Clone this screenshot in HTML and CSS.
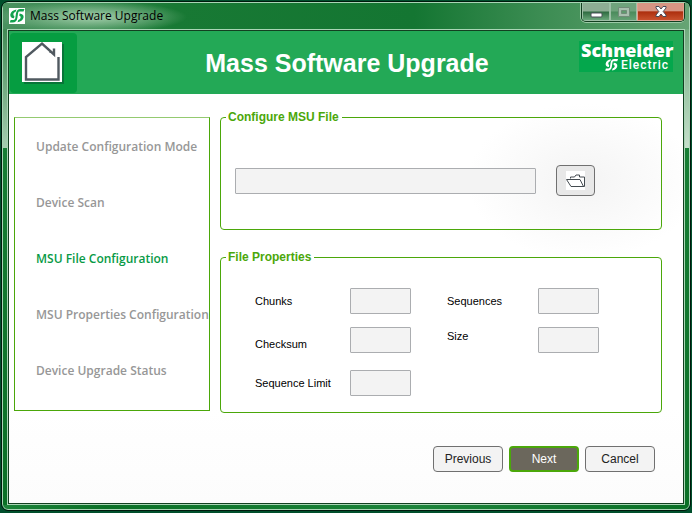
FILE: index.html
```html
<!DOCTYPE html>
<html lang="en">
<head>
<meta charset="utf-8">
<title>Mass Software Upgrade</title>
<link rel="stylesheet" href="styles.css">
</head>
<body>
<div class="window">
  <div class="frame">
    <div class="titlebar">
      <svg class="app-icon" viewBox="0 0 16 16" aria-hidden="true">
        <rect width="16" height="16" fill="#fff"/>
        <path d="M15.500 1L14.500 3.600H10.500Q9.300 3.600 9.100 5L8.500 9.500Q7.800 14.600 3.500 14.600H.8L1.600 12H4.500Q6 12 6.300 10.300L6.900 5.800Q7.500 1 11.500 1z" fill="#12a24e"/>
        <path d="M7.500 1.500Q2 2.500 1.300 6.500 1 10 5 10.200L5.400 8Q3.800 7.500 4.500 5.500 5 4.300 6.600 3.800zM8.500 14.200Q14 13.200 14.600 9.300 14.900 6 10.600 5.500L10.300 7.700Q12.200 8.200 11.600 10 11 11.300 9.300 12z" fill="#12a24e"/>
      </svg>
      <span class="titlebar-text">Mass Software Upgrade</span>
      <div class="window-controls">
        <button class="control control-min" type="button" aria-label="Minimize">
          <svg width="13" height="6" viewBox="0 0 13 6"><rect x="1" y="1" width="11" height="4" rx="1" fill="#fff" stroke="#4a5058"/></svg>
        </button>
        <button class="control control-max" type="button" aria-label="Maximize" disabled>
          <svg width="12" height="10" viewBox="0 0 12 10"><path d="M.5.500h11v9H.5z" fill="#a9bfae" stroke="#718c78"/><path d="M3.500 3.500h5v3h-5z" fill="#5f9a6d" stroke="#718c78"/></svg>
        </button>
        <button class="control control-close" type="button" aria-label="Close">
          <svg width="12" height="11" viewBox="0 0 12 11"><path d="M1 .5h3L6 3 8 .5h3v1.500L8.200 5.500 11 9v1.500H8L6 8l-2 2.500H1V9l2.800-3.500L1 2z" fill="#fff" stroke="#474a58"/></svg>
        </button>
      </div>
    </div>
    <div class="client">
      <header class="banner">
        <button class="home" type="button" aria-label="Home">
          <svg width="44" height="44" viewBox="0 0 44 44">
            <path d="M3 3H43V43H3z" fill="#087538"/>
            <path d="M1 1H41V41H1z" fill="#fff"/>
            <path d="M37.500 16V38.500H5V16L21 2.500 33 13.500V7.500" fill="none" stroke="#505960" stroke-width="2.400"/>
            <path d="M28.500 11.500H33.500V14.500" fill="none" stroke="#505960"/>
          </svg>
        </button>
        <h1 class="banner-title">Mass Software Upgrade</h1>
        <div class="brand">
          <span class="brand-name">Schneider</span>
          <span class="brand-sub">
            <svg width="15" height="14" viewBox="0 0 16 16" aria-hidden="true">
              <path d="M15.500 1L14.500 3.600H10.500Q9.300 3.600 9.100 5L8.500 9.500Q7.800 14.600 3.500 14.600H.8L1.600 12H4.500Q6 12 6.300 10.300L6.900 5.800Q7.500 1 11.500 1z" fill="#fff"/>
              <path d="M7.500 1.500Q2 2.500 1.300 6.500 1 10 5 10.200L5.400 8Q3.800 7.500 4.500 5.500 5 4.300 6.600 3.800zM8.500 14.200Q14 13.200 14.600 9.300 14.900 6 10.600 5.500L10.300 7.700Q12.200 8.200 11.600 10 11 11.300 9.300 12z" fill="#fff"/>
            </svg>
            <span>Electric</span>
          </span>
        </div>
      </header>
      <div class="content">
        <nav class="steps" aria-label="Steps">
          <a class="step" href="#">Update Configuration Mode</a>
          <a class="step" href="#">Device Scan</a>
          <a class="step step-current" href="#" aria-current="step">MSU File Configuration</a>
          <a class="step" href="#">MSU Properties Configuration</a>
          <a class="step" href="#">Device Upgrade Status</a>
        </nav>
        <form class="main">
          <fieldset class="group">
            <legend>Configure MSU File</legend>
            <div class="file-row">
              <input class="field" type="text" aria-label="MSU file" readonly>
              <button class="button browse" type="button" aria-label="Browse">
                <svg width="19" height="19" viewBox="0 0 19 19">
                  <rect width="19" height="19" fill="#fff"/>
                  <path d="M4.500 7.500V6H8.500L10 4H13.500V6H18.500V15.500H17M.5 8.500H14L17.500 15.500H5L.5 8.500" fill="none" stroke="#444b50"/>
                </svg>
              </button>
            </div>
          </fieldset>
          <fieldset class="group">
            <legend>File Properties</legend>
            <div class="properties">
              <label for="chunks">Chunks</label>
              <input class="field" id="chunks" type="text" readonly>
              <label for="sequences">Sequences</label>
              <input class="field" id="sequences" type="text" readonly>
              <label for="checksum">Checksum</label>
              <input class="field" id="checksum" type="text" readonly>
              <label class="label-top" for="size">Size</label>
              <input class="field" id="size" type="text" readonly>
              <label for="limit">Sequence Limit</label>
              <input class="field" id="limit" type="text" readonly>
            </div>
          </fieldset>
          <div class="actions">
            <button class="button" type="button">Previous</button>
            <button class="button button-primary" type="button">Next</button>
            <button class="button" type="button">Cancel</button>
          </div>
        </form>
      </div>
    </div>
  </div>
</div>
</body>
</html>
```

FILE: styles.css
```css
* {
  box-sizing: border-box;
}

html,
body {
  height: 100%;
}

body {
  margin: 0;
  padding: 1px 1px 2px;
  background: #004f2c;
  font-family: "Liberation Sans", Arial, sans-serif;
  font-size: 12px;
  color: #000;
}

button,
input {
  font: inherit;
}

.window {
  height: 100%;
  border: 1px solid #001a0c;
  border-radius: 7px;
  overflow: hidden;
}

.frame {
  display: flex;
  flex-direction: column;
  height: 100%;
  padding: 0 4px 4px;
  border: 1px solid #a9d5b5;
  border-radius: 6px;
  background:
    linear-gradient(#2a7c40 0, #a5cdb0 145px, transparent 145px) left / 4px 100% no-repeat,
    linear-gradient(#5d9f6c 0, #c5dfcb 145px, transparent 145px) right / 4px 100% no-repeat,
    linear-gradient(90deg, #1c843a, #0a7026 15%, #1c843a 60%, #0a7026) bottom / 100% 4px no-repeat,
    linear-gradient(#1c843a, #0a7026) 0 0 no-repeat;
}

.titlebar {
  display: flex;
  align-items: center;
  flex: none;
  height: 26px;
  margin: 0 -4px;
  padding: 0 4px 0 6px;
  background:
    radial-gradient(ellipse 96px 16px at 88px 14px, #8fc19a 20%, transparent),
    linear-gradient(90deg, #4a9260, #187934 25%, #147632 60%, #3b8c52 78%, #66a474);
}

.app-icon {
  width: 16px;
  height: 16px;
}

.titlebar-text {
  flex: 1;
  margin-left: 5px;
  font-family: "Open Sans", sans-serif;
  line-height: 16px;
}

.window-controls {
  display: flex;
  align-self: flex-start;
  height: 19px;
  border: 1px solid #123f20;
  border-top: 0;
  border-radius: 0 0 5px 5px;
  box-shadow: 0 1px 0 #9cc9a7, -1px 0 0 #9cc9a7;
  overflow: hidden;
}

.control {
  display: flex;
  align-items: center;
  justify-content: center;
  width: 27px;
  padding: 0;
  border: 1px solid #9dbfa6;
  border-top: 0;
  background: linear-gradient(#8dad94 48%, #2e6b40 52%, #6aa77a);
}

.control-min {
  width: 28px;
  padding-top: 6px;
}

.control-max {
  background: linear-gradient(#6fa37c 48%, #4a8b5b 52%, #65a074);
}

.control-close {
  width: 47px;
  border-color: #e0a191;
  background: linear-gradient(#d79583 46%, #ad2f0e 52%, #c8512d);
}

.client {
  display: flex;
  flex-direction: column;
  flex: 1;
  min-height: 0;
  border: 1px solid #a9d5b5;
  outline: 1px solid #123f20;
  outline-offset: -2px;
  padding: 1px;
  background:
    radial-gradient(ellipse 115px 78px at 85% 32%, #f4f4f4, rgba(255, 255, 255, 0)),
    linear-gradient(#fff 80%, #fcfcfc);
}

.banner {
  display: flex;
  align-items: center;
  flex: none;
  height: 63px;
  padding: 0 10px 0 1px;
  background: #23a956;
}

.home {
  display: flex;
  align-items: center;
  justify-content: center;
  width: 67px;
  height: 60px;
  padding: 0 2px 0 0;
  border: 0;
  border-radius: 4px;
  background: #069d41;
}

.banner-title {
  flex: 1;
  margin: 0;
  padding-left: 38px;
  font-size: 25px;
  line-height: 28px;
  text-align: center;
  color: #fff;
}

.brand {
  display: flex;
  flex-direction: column;
  width: 94px;
  height: 31px;
  margin-bottom: 12px;
  padding: 0 2px;
  background: #04a74c;
  color: #fff;
}

.brand-name {
  height: 17px;
  font-family: "Open Sans", sans-serif;
  font-size: 18px;
  font-weight: 800;
  line-height: 18px;
}

.brand-sub {
  display: flex;
  align-items: center;
  justify-content: flex-end;
  gap: 2px;
  padding-right: 2px;
  font-family: Roboto, sans-serif;
  font-size: 12px;
  font-weight: 500;
  letter-spacing: 1px;
  line-height: 13px;
}

.content {
  display: flex;
  align-items: flex-start;
  gap: 10px;
  flex: 1;
  padding: 16px 21px 0 5px;
}

.steps {
  display: flex;
  flex-direction: column;
  flex: none;
  gap: 38px;
  width: 196px;
  height: 294px;
  margin-top: 7px;
  padding: 20px 0 0 21px;
  border: 1px solid #4ba70a;
  border-top-color: #94ca70;
}

.step {
  font-family: "Open Sans", sans-serif;
  font-size: 12px;
  font-weight: 600;
  line-height: 18px;
  white-space: nowrap;
  color: #979797;
  text-decoration: none;
}

.step-current {
  color: #079a46;
}

.main {
  flex: 1;
  min-width: 0;
}

.group {
  min-width: 0;
  margin: 0 0 20px;
  padding: 0 14px 16px;
  border: 1px solid #4ba70a;
  border-radius: 4px;
}

.group legend {
  margin-left: -9px;
  padding: 0 3px 0 2px;
  font-weight: 700;
  line-height: 14px;
  color: #4ba70a;
}

.field {
  width: 100%;
  height: 26px;
  padding: 0 4px;
  border: 1px solid #abadb0;
  border-radius: 1px;
  background: #f3f3f3;
}

.file-row {
  display: flex;
  align-items: center;
  gap: 20px;
  padding: 41px 52px 17px 0;
}

.file-row .field {
  flex: 1;
}

.button {
  width: 70px;
  height: 26px;
  padding: 0;
  border: 1px solid #707070;
  border-radius: 4px;
  background: #f3f3f3;
  color: #222;
}

.browse {
  display: flex;
  align-items: center;
  justify-content: center;
  width: 39px;
  height: 31px;
  background: #e8e8e8;
}

.properties {
  display: grid;
  grid-template-columns: 95px 61px 127px 61px;
  grid-template-rows: 26px 30px 26px;
  row-gap: 13px;
  padding: 24px 0 0 20px;
  font-size: 11px;
}

.properties label {
  align-self: end;
  line-height: 26px;
}

.properties label:nth-of-type(even) {
  padding-left: 36px;
}

.properties .label-top {
  align-self: start;
  line-height: 18px;
}

.actions {
  display: flex;
  justify-content: flex-end;
  gap: 6px;
  margin-top: 33px;
  padding-right: 7px;
}

.button-primary {
  border: 2px solid #4ba70a;
  background: #6b675c;
  color: #fff;
}
```
